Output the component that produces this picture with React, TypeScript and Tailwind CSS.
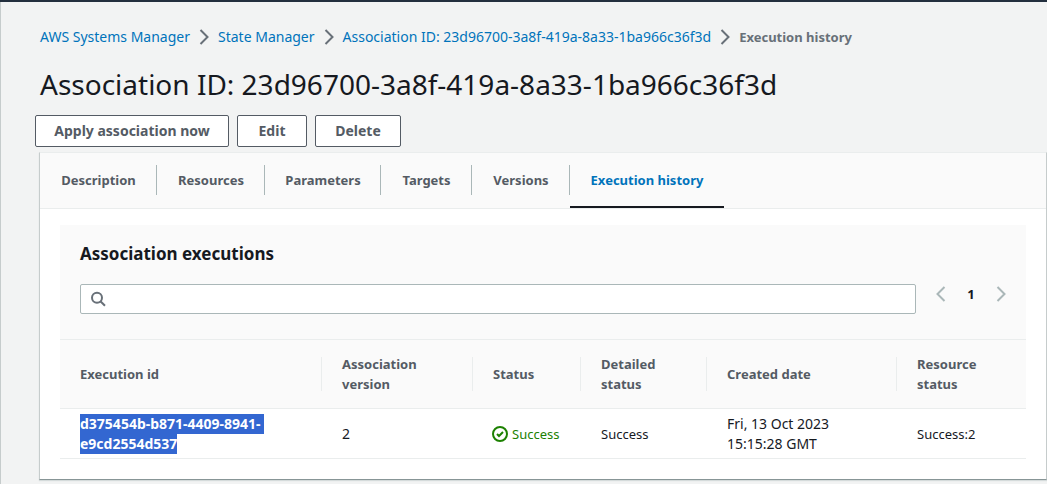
import React, { useState } from "react";

const executionId = ["d375454b-b871-4409-8941-\u00a0", "e9cd2554d537"];

const crumbs = ["AWS Systems Manager", "State Manager", "Association ID: 23d96700-3a8f-419a-8a33-1ba966c36f3d"];

const tabs = [
  { label: "Description", width: "w-[117px]" },
  { label: "Resources", width: "w-[108px]" },
  { label: "Parameters", width: "w-[116px]" },
  { label: "Targets", width: "w-[91px]" },
  { label: "Versions", width: "w-[98px]" },
  { label: "Execution history", width: "w-[154px]" },
];

const columns = [
  { label: "Execution id", width: "w-[262px]" },
  { label: "Association version", width: "w-[151px]" },
  { label: "Status", width: "w-[108px]" },
  { label: "Detailed status", width: "w-[126px]" },
  { label: "Created date", width: "w-[190px]" },
  { label: "Resource status", width: "w-auto" },
];

function Chevron({ left = false, className = "" }: { left?: boolean; className?: string }) {
  return (
    <svg viewBox="0 0 10 16" className={`h-4 w-2.5 shrink-0 ${className}`} fill="none" stroke="currentColor" strokeWidth="2" aria-hidden="true">
      <path d={left ? "M8.5 1 1.5 8l7 7" : "M1.5 1l7 7-7 7"} />
    </svg>
  );
}

function ActionButton({ children, className }: { children: React.ReactNode; className: string }) {
  return (
    <button type="button" className={`h-8 rounded-xs border border-[#545b64] bg-white text-center text-[14px] font-bold whitespace-nowrap text-[#545b64] ${className}`}>
      {children}
    </button>
  );
}

export default function App() {
  const [active, setActive] = useState("Execution history");

  return (
    <div className="min-h-screen border-t-2 border-[#232f3e] bg-[#f2f3f3] font-['Noto_Sans',sans-serif] text-[13px] leading-5 text-[#16191f]">
      <div className="min-h-[482px] border-l border-[#c6cccc] pb-1">
        <nav aria-label="Breadcrumb" className="pt-[25px] pl-[39px]">
          <ol className="flex items-center gap-[9px] whitespace-nowrap">
            {crumbs.map((crumb) => (
              <li key={crumb} className="flex items-center gap-[9px]">
                <a href="#" className="text-[14px] text-[#0073bb]">{crumb}</a>
                <Chevron className="text-[#687078]" />
              </li>
            ))}
            <li aria-current="page" className="font-bold text-[#687078]">Execution history</li>
          </ol>
        </nav>

        <h1 className="mt-[19px] pl-[39px] text-[28px] leading-9 whitespace-nowrap">
          Association ID: 23d96700-3a8f-419a-8a33-1ba966c36f3d
        </h1>

        <div className="mt-[13px] flex gap-2 pl-[34px]">
          <ActionButton className="w-[194px]">Apply association now</ActionButton>
          <ActionButton className="w-[70px]">Edit</ActionButton>
          <ActionButton className="w-[86px]">Delete</ActionButton>
        </div>

        <main className="mt-[5px] ml-[38px] border-x border-t border-b border-x-[#c6cccc] border-t-[#eaeded] border-b-[#879596] bg-white shadow-[0_1px_1px_#d5dbdb]">
          <div role="tablist" className="flex h-14 border-b border-[#eaeded] bg-[#fafafa]">
            {tabs.map((tab, i) => (
              <div key={tab.label} className={`relative flex items-center ${tab.width}`}>
                <button
                  type="button"
                  role="tab"
                  aria-selected={active === tab.label}
                  onClick={() => setActive(tab.label)}
                  className={`h-full w-full border-b-2 text-center font-bold whitespace-nowrap ${active === tab.label ? "border-[#16191f] text-[#0073bb]" : "border-transparent text-[#545b64]"}`}
                >
                  {tab.label}
                </button>
                {i < tabs.length - 1 && <span className="absolute top-3 right-0 h-[30px] w-px bg-[#aab7b8]" />}
              </div>
            ))}
          </div>

          <section className="mx-5 mt-4 mb-5">
            <div className="bg-[#fafafa] px-5 pt-[18px] pb-[25px]">
              <h2 className="text-[17px] leading-[22px] font-bold">Association executions</h2>
              <div className="mt-[19px] flex items-start">
                <label className="flex h-[30px] grow items-center gap-2 rounded-xs border border-[#aab7b8] bg-white pl-[9px]">
                  <svg viewBox="0 0 16 16" className="size-4 shrink-0" fill="none" stroke="#687078" strokeWidth="2" aria-hidden="true">
                    <circle cx="7" cy="6.8" r="5" />
                    <path d="M10.4 10.2l4.6 4.6" />
                  </svg>
                  <input type="text" aria-label="Search association executions" className="h-full w-full bg-transparent outline-none" />
                </label>
                <div className="ml-5 flex h-5 w-[70px] items-center justify-between">
                  <button type="button" aria-label="Previous page"><Chevron left className="text-[#aab7b8]" /></button>
                  <button type="button" aria-label="Page 1" className="font-bold">1</button>
                  <button type="button" aria-label="Next page"><Chevron className="text-[#aab7b8]" /></button>
                </div>
              </div>
            </div>

            <table className="w-full table-fixed border-collapse text-left">
              <thead>
                <tr className="h-[69px] border-y border-[#eaeded] bg-[#fafafa] text-[#545b64]">
                  {columns.map((column, i) => (
                    <th key={column.label} scope="col" className={`p-0 align-middle font-bold ${column.width}`}>
                      <div className={`flex h-[34px] items-center pr-5 pl-5 ${i < columns.length - 1 ? "border-r border-[#eaeded]" : ""}`}>
                        {column.label}
                      </div>
                    </th>
                  ))}
                </tr>
              </thead>
              <tbody>
                <tr className="h-[50px] border-b border-[#eaeded]">
                  <td className="px-5 py-1 text-[14px] font-bold whitespace-nowrap">
                    {executionId.map((line) => (
                      <div key={line} className="w-fit bg-[#3367d1] text-white">{line}</div>
                    ))}
                  </td>
                  <td className="px-5 text-[14px]">2</td>
                  <td className="pl-[19px]">
                    <span className="flex items-center gap-1 text-[#1d8102]">
                      <svg viewBox="0 0 16 16" className="size-4 shrink-0" fill="none" stroke="currentColor" strokeWidth="2" aria-hidden="true">
                        <circle cx="8" cy="8" r="7" />
                        <path d="M5 8l2 2 4-4" />
                      </svg>
                      Success
                    </span>
                  </td>
                  <td className="px-5">Success</td>
                  <td className="px-5 text-[14px]">Fri, 13 Oct 2023<br />15:15:28 GMT</td>
                  <td className="px-5">Success:2</td>
                </tr>
              </tbody>
            </table>
          </section>
        </main>
      </div>
    </div>
  );
}
